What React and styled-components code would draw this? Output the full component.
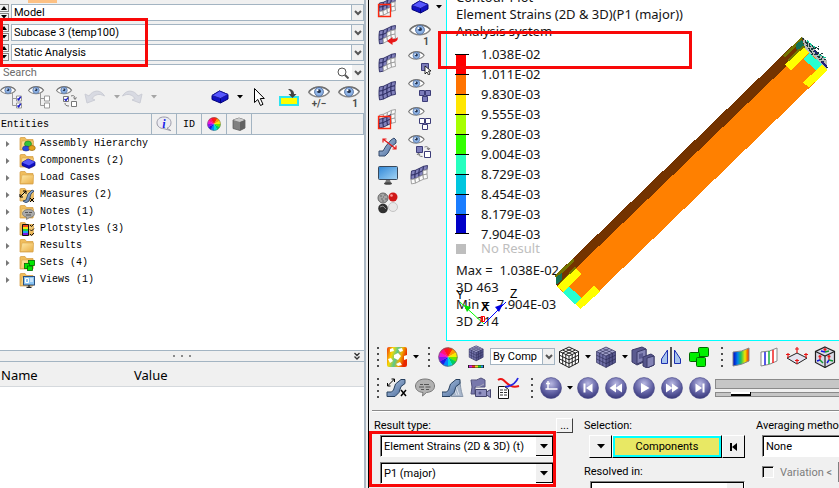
import styled, { createGlobalStyle } from "styled-components";

const GlobalStyle = createGlobalStyle`
  * {
    box-sizing: border-box;
  }
  body {
    margin: 0;
    background: #f0f0f0;
    color: #000;
    font-family: Roboto, "Liberation Sans", Arial, sans-serif;
    font-size: 11px;
  }
  button, select, input {
    font: inherit;
    color: inherit;
    margin: 0;
    padding: 0;
    border: 0;
    border-radius: 0;
    background: transparent;
  }
  svg {
    display: block;
    flex: none;
  }
`;

const Window = styled.div`
  display: flex;
  height: 100vh;
  overflow: hidden;
`;

const Sidebar = styled.aside`
  position: relative;
  flex: 0 0 369px;
  display: flex;
  flex-direction: column;
  padding-right: 2px;
  border-right: 1px solid #000;
`;

const SidebarBody = styled.div`
  flex: 1;
  min-height: 0;
  display: flex;
  flex-direction: column;
  border-right: 2px solid #acb9c5;
`;

const TabStrip = styled.div`
  display: flex;
  height: 4px;
  padding-left: 28px;
`;

const ActiveTab = styled.div`
  width: 29px;
  height: 3px;
  background: #fdc184;
`;

const FieldRow = styled.div`
  display: flex;
  gap: 2px;
  height: 17px;
  margin-bottom: 3px;
`;

const Stepper = styled.div`
  width: 9px;
  display: flex;
  flex-direction: column;
  gap: 1px;
`;

const StepButton = styled.button`
  flex: 1;
  display: flex;
  align-items: center;
  justify-content: center;
  border: 1px solid #888;
  border-left: 0;
  background: #f0f0f0;
`;

const Field = styled.div`
  flex: 1;
  min-width: 0;
  display: flex;
  height: 17px;
  border: 1px solid #a3b4c2;
  background: #fff;
`;

const FieldSelect = styled.select`
  flex: 1;
  min-width: 0;
  padding-left: 2px;
  appearance: none;
  outline: none;
`;

const FieldArrow = styled.span`
  width: 12px;
  display: flex;
  align-items: center;
  justify-content: center;
  background: #f0f0f0;
  border-left: ${(p) => (p.$flat ? "0" : "1px solid #a3b4c2")};
`;

const SearchField = styled(Field)`
  flex: none;
  align-items: center;
  border-left: 0;
  border-right: 0;
  input {
    flex: 1;
    min-width: 0;
    padding-left: 3px;
    outline: none;
  }
  input::placeholder {
    color: #6c6c6c;
    opacity: 1;
  }
  ${FieldArrow} {
    height: 15px;
    margin-left: 3px;
  }
`;

const ToolRow = styled.div`
  display: flex;
  align-items: center;
  height: ${(p) => p.$height}px;
`;

const Tool = styled.button`
  flex: none;
  display: flex;
  align-items: center;
  justify-content: ${(p) => (p.$start ? "flex-start" : "center")};
  width: ${(p) => p.$width || 28}px;
  height: 28px;
  opacity: ${(p) => (p.disabled ? 0.6 : 1)};
`;

const CaretButton = styled.button`
  flex: none;
  width: 9px;
  height: 24px;
  display: flex;
  align-items: center;
  justify-content: center;
  color: ${(p) => (p.disabled ? "#a5a5a5" : "#000")};
`;

const Spacer = styled.div`
  flex: 1;
`;

const TreeHead = styled.div`
  display: flex;
  height: 22px;
  border-top: 1px solid #a3b4c2;
  border-bottom: 1px solid #a3b4c2;
  font-family: "Liberation Mono", "Courier New", monospace;
  font-size: 10px;
`;

const HeadCell = styled.div`
  flex: ${(p) => (p.$width ? `0 0 ${p.$width}px` : 1)};
  display: flex;
  align-items: center;
  justify-content: ${(p) => (p.$text ? "flex-start" : "center")};
  padding-left: ${(p) => (p.$text ? 1 : 0)}px;
  border-right: 1px solid #a3b4c2;
`;

const Tree = styled.ul`
  flex: 1;
  min-height: 0;
  margin: 0;
  padding: 0;
  overflow: hidden;
  list-style: none;
  background: #fff;
  font-family: "Liberation Mono", "Courier New", monospace;
  font-size: 10px;
`;

const TreeItem = styled.li`
  display: flex;
  align-items: center;
  height: 17px;
  button {
    width: 19px;
    height: 17px;
    padding-left: 6px;
  }
  span {
    padding-left: 4px;
  }
`;

const Splitter = styled.div`
  display: grid;
  grid-template-columns: 1fr auto 1fr;
  align-items: center;
  height: 12px;
  border-top: 1px solid #a3b4c2;
  border-bottom: 1px solid #a3b4c2;
  button {
    justify-self: end;
    padding-right: 4px;
  }
`;

const PropertyPane = styled.div`
  flex: 0 0 126px;
  background: #fff;
`;

const PropertyTable = styled.table`
  width: 100%;
  border-collapse: collapse;
  table-layout: fixed;
  font-family: "Noto Sans", sans-serif;
  font-size: 13px;
  th {
    height: 24px;
    padding: 4px 0 1px 1px;
    background: #f0f0f0;
    border-bottom: 1px solid #d5d9dd;
    font-weight: 400;
    line-height: 18px;
    text-align: left;
  }
  th:first-child {
    width: 133px;
  }
`;

const Main = styled.main`
  flex: 1;
  min-width: 0;
  display: flex;
  flex-direction: column;
`;

const Stage = styled.div`
  flex: 1;
  min-height: 0;
  display: flex;
`;

const SideTools = styled.div`
  flex: 0 0 77px;
  display: flex;
  align-items: flex-start;
  gap: 4px;
  padding-left: 5px;
  overflow: hidden;
`;

const ToolColumn = styled.div`
  display: flex;
  flex-direction: column;
  margin-top: -7px;
`;

const Viewport = styled.section`
  position: relative;
  flex: 1;
  min-width: 0;
  display: flex;
  flex-direction: column;
  justify-content: flex-end;
  padding: 0 0 10px 9px;
  border-left: 1px solid #00ffff;
  border-bottom: 1px solid #00ffff;
  background: #fff;
  font-family: "Noto Sans", sans-serif;
  font-size: 13px;
  line-height: 17px;
  white-space: nowrap;
  color: #141414;
`;

const Caption = styled.div`
  margin-bottom: 4px;
`;

const Scale = styled.div`
  display: flex;
`;

const ScaleBar = styled.div`
  width: 14px;
  height: 180px;
  margin: 10px 0 0 -1px;
`;

const ScaleStep = styled.div`
  height: 20px;
  border-top: 1px solid #000;
  &:last-child {
    border-bottom: 1px solid #000;
  }
  &::before {
    content: "";
    display: block;
    width: 10px;
    height: 100%;
    margin-left: 1px;
    background: ${(p) => p.$color};
  }
`;

const ScaleLabels = styled.ol`
  margin: 0;
  padding: 0 0 0 12px;
  list-style: none;
  line-height: 20px;
`;

const NoResult = styled.div`
  display: flex;
  justify-content: flex-start;
  gap: 15px;
  height: 13px;
  margin-bottom: 8px;
  color: #bebebe;
  line-height: 9px;
  &::before {
    content: "";
    align-self: flex-end;
    width: 10px;
    height: 10px;
    background: #bebebe;
  }
`;

const Model = styled.svg`
  position: absolute;
  left: 93px;
  top: 20px;
`;

const Triad = styled.svg`
  position: absolute;
  left: 6px;
  bottom: 11px;
`;

const Marker = styled.div`
  position: absolute;
  z-index: 2;
  left: ${(p) => p.$left}px;
  top: ${(p) => p.$top}px;
  width: ${(p) => p.$width}px;
  height: ${(p) => p.$height}px;
  border: 3px solid #f80808;
  pointer-events: none;
`;

const Grip = styled.span`
  flex: none;
  width: 14px;
  height: 20px;
  padding-right: 4px;
  display: flex;
  justify-content: flex-end;
  &::before {
    content: "";
    width: 2px;
    background: repeating-linear-gradient(#4d4d4d 0 2px, transparent 2px 6px);
  }
`;

const ComboField = styled(Field)`
  flex: 0 0 65px;
`;

const Timeline = styled.div`
  flex: 1;
  display: flex;
  flex-direction: column;
  gap: 3px;
  padding-left: 1px;
`;

const Track = styled.div`
  height: ${(p) => p.$height}px;
  border: 1px solid #8a8a8a;
  border-right: 0;
  background: #c6c6c6;
`;

const Range = styled.input`
  appearance: none;
  display: block;
  width: 100%;
  height: 5px;
  border: 1px solid #8a8a8a;
  border-right: 0;
  background: #c6c6c6;
  outline: none;
  &::-webkit-slider-thumb {
    appearance: none;
    width: 20px;
    height: 4px;
    border-bottom: 2px solid #000;
    border-right: 1px solid #000;
    background: #fff;
  }
`;

const ResultPanel = styled.form`
  position: relative;
  flex: 0 0 85px;
  padding: 7px 0 0 3px;
  overflow: hidden;
`;

const PanelGrid = styled.div`
  display: grid;
  grid-template-columns: 199px 161px minmax(110px, 1fr);
  column-gap: 11px;
  border-top: 1px solid #8a8a8a;
  box-shadow: inset 0 1px #fff;
  padding: 7px 0 0 2px;
`;

const PanelColumn = styled.div`
  display: flex;
  flex-direction: column;
  min-width: 0;
`;

const LabelLine = styled.div`
  display: flex;
  justify-content: space-between;
  height: 17px;
  line-height: 16px;
  white-space: nowrap;
`;

const MoreButton = styled.button`
  width: 17px;
  height: 15px;
  border: 1px solid #fff;
  border-right-color: #404040;
  border-bottom-color: #404040;
  line-height: 10px;
`;

const Drop = styled.div`
  display: flex;
  height: 22px;
  margin: 0 ${(p) => p.$right || 0}px 5px 6px;
  border: 1px solid #808080;
  border-right-color: #fff;
  border-bottom-color: #fff;
  box-shadow: inset 1px 1px #000;
  background: #fff;
`;

const DropSelect = styled.select`
  flex: 1;
  min-width: 0;
  padding-left: 3px;
  appearance: none;
  outline: none;
`;

const DropArrow = styled.span`
  width: 17px;
  margin-top: 1px;
  display: flex;
  align-items: center;
  justify-content: center;
  background: #f0f0f0;
  border-right: 1px solid #000;
  border-bottom: 1px solid #000;
`;

const Picker = styled.div`
  display: flex;
  height: 23px;
  margin: 0 0 6px 5px;
`;

const PickerButton = styled.button`
  flex: ${(p) => (p.$grow ? 1 : "0 0 23px")};
  display: flex;
  align-items: center;
  justify-content: center;
  border: 1px solid #fff;
  border-right-color: #000;
  border-bottom-color: #000;
  ${(p) =>
    p.$grow &&
    `
    background: #e8e864;
    box-shadow: inset 0 0 0 2px #00ffff;
  `}
`;

const CheckLine = styled.div`
  display: flex;
  align-items: center;
  gap: 6px;
  margin-left: 6px;
  color: #7d7d7d;
  white-space: nowrap;
  input[type="checkbox"] {
    appearance: none;
    width: 12px;
    height: 12px;
    border: 1px solid #808080;
    border-right-color: #fff;
    border-bottom-color: #fff;
    box-shadow: inset 1px 1px #000;
  }
  input[type="text"] {
    flex: 1;
    min-width: 0;
    height: 20px;
    border: 1px solid #808080;
    box-shadow: inset 1px 1px #000;
  }
`;

/* shared paints for all the icons */
function Paints() {
  return (
    <svg width="0" height="0" style={{ position: "absolute" }} aria-hidden="true">
      <defs>
        <radialGradient id="ball" cx="50%" cy="30%" r="70%">
          <stop offset="0" stopColor="#b9b9e2" />
          <stop offset="0.6" stopColor="#6464a6" />
          <stop offset="1" stopColor="#38387a" />
        </radialGradient>
        <linearGradient id="folder" x2="1" y2="1">
          <stop offset="0" stopColor="#ffeaa8" />
          <stop offset="1" stopColor="#e9ad45" />
        </linearGradient>
        <linearGradient id="steel" x2="1" y2="1">
          <stop offset="0" stopColor="#b3c8e4" />
          <stop offset="1" stopColor="#46689a" />
        </linearGradient>
        <linearGradient id="rainbow">
          <stop offset="0" stopColor="#0000c8" />
          <stop offset="0.3" stopColor="#0084e8" />
          <stop offset="0.5" stopColor="#22c35a" />
          <stop offset="0.75" stopColor="#f2e600" />
          <stop offset="1" stopColor="#f02000" />
        </linearGradient>
        <linearGradient id="heat" x2="1" y2="0.3">
          <stop offset="0" stopColor="#f03010" />
          <stop offset="0.3" stopColor="#f8d800" />
          <stop offset="0.55" stopColor="#58c890" />
          <stop offset="0.75" stopColor="#f0b000" />
          <stop offset="1" stopColor="#e82800" />
        </linearGradient>
        <linearGradient id="screen" x2="1" y2="1">
          <stop offset="0" stopColor="#2f86d6" />
          <stop offset="1" stopColor="#a5d6f6" />
        </linearGradient>
      </defs>
    </svg>
  );
}

function Icon({ w = 22, h = 22, box, children }) {
  return (
    <svg width={w} height={h} viewBox={box || `0 0 ${w} ${h}`} fill="none" aria-hidden="true">
      {children}
    </svg>
  );
}

const Caret = () => (
  <Icon w={6} h={4}>
    <path d="M0 0h6L3 3.5z" fill="currentColor" />
  </Icon>
);

const Chevron = () => (
  <Icon w={8} h={6}>
    <path d="M1 1l3 3 3-3" stroke="#555" strokeWidth="2" />
  </Icon>
);

const BigCaret = () => (
  <Icon w={8} h={5}>
    <path d="M0 0h8L4 4.5z" fill="#000" />
  </Icon>
);

function EyeShape({ x = 0, y = 0, s = 1 }) {
  return (
    <g transform={`translate(${x} ${y}) scale(${s})`}>
      <path d="M0.7 6.2C5-.2 16-.6 21.3 5.6 17 12 5.5 12.5.7 6.2z" fill="#fff" stroke="#858585" strokeWidth="1.5" />
      <path d="M1 5.5C6-.5 16-.8 21 5" stroke="#6f6f6f" strokeWidth="1.2" />
      <circle cx="11" cy="5.8" r="4.4" fill="#8fb4e6" stroke="#5573a4" />
      <circle cx="11" cy="5.2" r="1.9" fill="#25344f" />
      <circle cx="9.5" cy="4.3" r="1" fill="#fff" />
    </g>
  );
}

function Eye({ text }) {
  return (
    <Icon w={22} h={24}>
      <EyeShape y={1} />
      <text x={text === "1" ? 17 : 11} y="22" textAnchor="middle" fontSize="10" fontWeight="bold" fill="#4c4c4c">
        {text}
      </text>
    </Icon>
  );
}

function EyeTree({ mode }) {
  const on = mode === "on";
  return (
    <Icon w={24} h={24}>
      <EyeShape y={1} s={0.73} />
      {mode === "swap" ? (
        <g>
          <path d="M7.5 11.5h5v5h-5zM15.5 16.5h5v5h-5z" fill="#fff" stroke="#777" />
          <path d="M8.5 14l1.5 1.5 2-3" stroke="#1515c8" strokeWidth="1.3" />
          <path d="M15 11c3-1 4 0 4 3M17.5 12.5L19 14.5l1.5-2M13 21c-3 0-4-1-4-3" stroke="#777" />
        </g>
      ) : (
        <g>
          <path d="M12.5 8v12.5H16M12.5 13.5H16" stroke="#999" />
          <path d="M16.5 11h5v5h-5zM16.5 18h5v5h-5z" fill="#fff" stroke="#999" />
          {on && <path d="M17.5 13.5l1.2 1.2 2-3M17.5 20.5l1.2 1.2 2-3" stroke="#1515c8" strokeWidth="1.5" />}
        </g>
      )}
    </Icon>
  );
}

const eyeExtras = {
  pick: (
    <g>
      <path d="M13.5 12.5h7v7h-7z" fill="#7c7cba" stroke="#3c3c78" />
      <path d="M17 15v8l2-2 1.5 3 1.5-1-1.5-3h2.5z" fill="#fff" stroke="#000" strokeWidth="0.8" />
    </g>
  ),
  filled: <path d="M11.5 11.5h5v5h-5zM17.500 11.500h5v5h-5zM14.500 17.500h5v5h-5z" fill="#7c7cba" stroke="#3c3c78" />,
  hollow: <path d="M11.5 11.5h5v5h-5zM17.500 11.500h5v5h-5zM14.500 17.500h5v5h-5z" fill="#fff" stroke="#3c3c78" />,
  swap: (
    <g>
      <path d="M8.5 11.5h6v6h-6z" fill="#7c7cba" stroke="#3c3c78" />
      <path d="M16.5 16.5h6v6h-6z" fill="#fff" stroke="#3c3c78" />
      <path d="M16.5 12c3-1 4 0 4 3M19 13L20.500 15l1.500-2M14.500 21.500c-3 0-4-1-4-3M9 20l1.500-2 1.500 2" stroke="#777" />
    </g>
  ),
};

const EyeWith = ({ kind }) => (
  <Icon w={24} h={24}>
    <EyeShape y={0} s={0.76} />
    {eyeExtras[kind]}
  </Icon>
);

/* curved 4 x 3 sheet; each fill names the cells that are shaded */
const meshFills = {
  all: () => true,
  upper: (c, r) => r < 2 && !(c === 3 && r > 0) && !(c === 2 && r > 1),
  corner: (c, r) => r < 1 || (c < 2 && r < 2) || (c < 1 && r < 3),
  lower: (c, r) => r > 0 && c < 3,
};

const meshPoint = (c, r) => `${2 + c * 4 + (r === 1 || r === 2 ? 0 : 0.5)} ${(7 + r * 4.3 - 5.5 * (0.5 - 0.5 * Math.cos((c * Math.PI) / 4))).toFixed(1)}`;

function Mesh({ fill = "upper", red, arrow }) {
  const cells = [];
  for (let r = 0; r < 3; r++) {
    for (let c = 0; c < 4; c++) {
      const shaded = meshFills[fill](c, r);
      cells.push(
        <path
          key={`${c}-${r}`}
          d={`M${meshPoint(c, r)}L${meshPoint(c + 1, r)}L${meshPoint(c + 1, r + 1)}L${meshPoint(c, r + 1)}z`}
          fill={shaded ? "#8282bc" : "#fafafa"}
          stroke={shaded ? "#2b2b62" : "#999"}
          strokeWidth="0.9"
        />
      );
    }
  }
  return (
    <Icon w={22} h={22}>
      {cells}
      {red && <path d="M1.5 8.5h12v12h-12z" stroke="#ff2810" strokeWidth="1.3" />}
      {arrow && <path d="M20.5 13c1 4-2 5-5 5.500v2.500l-5.500-4 5.500-4v2c3 0 4-.500 5-2z" fill="#e81818" />}
    </Icon>
  );
}

const Brick = () => (
  <Icon w={18} h={14}>
    <path d="M1 5.5L8.5 1 17 4.5V9L9.5 13 1 9.5z" fill="#1111c4" stroke="#00007a" />
    <path d="M1 5.5L8.5 1 17 4.5 9.5 8.5z" fill="#5656ff" stroke="#1a1a9c" />
    <path d="M9.5 8.5V13" stroke="#00007a" />
  </Icon>
);

const wheelColors = ["#ff2a00", "#ff9a00", "#f5ee00", "#6be800", "#00d060", "#00d8e0", "#0086ff", "#1b1be8", "#8b12ec", "#e815d8", "#ff1080", "#ff1028"];

function Wheel({ size = 20 }) {
  return (
    <Icon w={size} h={size} box="-10 -10 20 20">
      {wheelColors.map((c, i) => {
        const a = (i * Math.PI) / 6;
        const b = ((i + 1.1) * Math.PI) / 6;
        return <path key={c} fill={c} d={`M0 0L${9.5 * Math.sin(a)} ${-9.5 * Math.cos(a)}A9.5 9.5 0 0 1 ${9.5 * Math.sin(b)} ${-9.5 * Math.cos(b)}z`} />;
      })}
      <circle r="9.3" stroke="#666" strokeWidth="0.7" />
    </Icon>
  );
}

function CubeShape({ wire }) {
  return (
    <g>
      <path d="M11 1l9.5 4.5v11L11 21.5l-9.5-5v-11z" fill={wire ? "#fff" : "#7373aa"} />
      {!wire && <path d="M11 1l9.5 4.5L11 10 1.5 5.5z" fill="#a6a6d0" />}
      {!wire && <path d="M11 10l9.5-4.5v11L11 21.5z" fill="#56568c" />}
      <path
        d="M11 1l9.5 4.5v11L11 21.5l-9.5-5v-11zM1.5 5.5L11 10l9.5-4.5M11 10v11.5M4.7 4l9.5 4.500v11.500M7.800 2.500l9.500 4.500v11.500M17.300 4L7.800 8.500v11.500M14.200 2.500L4.700 7v11.500M1.500 9.200L11 13.800l9.500-4.600M1.500 12.900L11 17.600l9.500-4.700"
        stroke={wire ? "#222" : "#25254f"}
        strokeWidth={wire ? 1 : 0.6}
      />
    </g>
  );
}

const Cube = ({ wire }) => (
  <Icon w={22} h={22}>
    <CubeShape wire={wire} />
  </Icon>
);

const GrayCube = () => (
  <Icon w={14} h={14}>
    <path d="M1 3l6-2 6 2v8l-5 2.5L1 11.5z" fill="#808080" stroke="#555" strokeWidth="0.7" />
    <path d="M1 3l6-2 6 2-5 2z" fill="#ccc" />
    <path d="M8 5l5-2v8l-5 2.5z" fill="#626262" />
  </Icon>
);

const CubeBar = () => (
  <Icon w={18} h={24}>
    <g transform="translate(1 0) scale(0.74)">
      <CubeShape />
    </g>
    <path d="M1 20h16v3H1z" fill="#222" />
    <path d="M2 20.5h3v2H2z" fill="#e020e0" />
    <path d="M5 20.5h3v2H5z" fill="#f03020" />
    <path d="M8 20.5h3v2H8z" fill="#f0e020" />
    <path d="M11 20.5h3v2h-3z" fill="#20d020" />
    <path d="M14 20.5h2v2h-2z" fill="#20a0f0" />
  </Icon>
);

const Beam = ({ x = 0, y = 0 }) => (
  <path
    transform={`translate(${x} ${y})`}
    d="M1 15v4.500h8l4-4 2-6 4-3V2.500h-4L9.500 7l-2 6-2 2z"
    fill="url(#steel)"
    stroke="#27405f"
  />
);

const MeasureIcon = () => (
  <Icon w={22} h={22}>
    <Beam />
    <path d="M1.5 9l7-7M1.5 6v3h3M5.5 2h3v3" stroke="#000" />
    <path d="M15 13l5 6M20 13l-5 6" stroke="#000" strokeWidth="1.5" />
  </Icon>
);

const SectionIcon = () => (
  <Icon w={22} h={22}>
    <path d="M2 15h4l3-5 5-6 3-2 2 2v3l-5 4-3 6-3 3H2z" fill="url(#steel)" stroke="#33496b" />
    <path d="M6 3l13 10M6 6.500V3h3.500M15.500 13H19V9.500" stroke="#e81818" strokeWidth="1.2" />
  </Icon>
);

const Bubble = () => (
  <Icon w={22} h={22}>
    <path d="M11 2c6 0 9.500 3 9.500 7s-3 6-8 6.500L8.500 19l.5-3.500C4 15 1.500 12.500 1.500 9S5 2 11 2z" fill="#b2b2b2" stroke="#777" />
    <path d="M6 7.500h3M10 7.500h5M5 10h5M11.500 10h5M7 12.500h3M12 12.500h3" stroke="#555" />
  </Icon>
);

const DeformedIcon = () => (
  <Icon w={22} h={22}>
    <path d="M9 19.500h12c-1-3-2-5-3-15l-4 3z" fill="#a9b7cb" stroke="#8796aa" />
    <path d="M14 9l3 9M12 12l3 6" stroke="#dde4ee" />
    <Beam x={-1} />
  </Icon>
);

const CameraIcon = () => (
  <Icon w={24} h={22}>
    <path d="M2 3q6 1 10-2l4 2v7H6v7H2l1-7z" fill="#7878ac" stroke="#51517c" />
    <path d="M7 10q4 0 8-3" stroke="#aab" />
    <path d="M6.5 12.5h11v7h-11zM17.5 15l4-2.5v8l-4-2.5z" fill="#9090c0" stroke="#44446e" />
    <circle cx="11" cy="16" r="1.5" fill="#55558a" />
  </Icon>
);

const PlotIcon = () => (
  <Icon w={24} h={22}>
    <path d="M1 3C8-2 9 13 22 9" stroke="#ee1515" strokeWidth="2" />
    <path d="M8 10C15 9 19 6 21 1" stroke="#2525e0" strokeWidth="1.8" />
    <path d="M1.5 9.500h6l4 3v9h-10z" fill="#fff" stroke="#111" />
    <path d="M3 13h3M7 13h3M3 15.500h3M7 15.500h3M3 18h3M7 18h3" stroke="#333" />
  </Icon>
);

const ContourIcon = () => (
  <Icon w={20} h={20}>
    <rect width="20" height="20" rx="2" fill="url(#heat)" />
    <path d="M3 2l3-1 1 3-4 1zM11 2l4-1 1 3-3 1zM1 12l3-1 2 3-3 2zM7 8l4-2 3 3-3 4-4-2zM9 17l4-2 2 3-4 1zM17 9l3-1v4l-3 1z" fill="#fff" />
  </Icon>
);

const CubesIcon = () => (
  <Icon w={24} h={22}>
    <path d="M1 4l10-3 4 2v12l-9 4-5-3z" fill="#5a5a90" stroke="#3a3a68" />
    <path d="M6 6l9-3v11l-9 4z" fill="#8484b6" stroke="#3a3a68" />
    <path d="M8 8l4-1v5l-4 1z" fill="#5a5a90" />
    <path d="M12 11l8-3 3 2v9l-7 3-4-2z" fill="#56568c" stroke="#3a3a68" />
    <path d="M16 12l7-2v9l-7 3z" fill="#8484b6" stroke="#3a3a68" />
  </Icon>
);

const MirrorIcon = () => (
  <Icon w={22} h={22}>
    <path d="M11 1v20" stroke="#000" strokeWidth="1.3" />
    <path d="M7.5 4v13.500h-6V13z" fill="#a7c4ee" stroke="#1c2fb0" />
    <path d="M14.5 4v13.500h6V13z" fill="#a7c4ee" stroke="#1c2fb0" />
  </Icon>
);

const SetsIcon = () => (
  <Icon w={22} h={22}>
    <g fill="#00f000" stroke="#006a00">
      <rect x="10.5" y="1.5" width="10" height="9" rx="1" />
      <rect x="1.5" y="6.5" width="10" height="9" rx="1" />
      <rect x="8.5" y="11.5" width="9" height="9" rx="1" />
    </g>
  </Icon>
);

const SheetIcon = ({ lines }) => (
  <Icon w={20} h={20}>
    <path d="M2 5q9 0 16-4v13q-7 4-16 5z" fill={lines ? "#fff" : "url(#rainbow)"} stroke="#888" />
    {lines && (
      <g strokeWidth="1.5">
        <path d="M6 5v13" stroke="#2020e0" />
        <path d="M10 4v13" stroke="#10b040" />
        <path d="M14 3v13" stroke="#f02020" />
      </g>
    )}
  </Icon>
);

const VectorIcon = () => (
  <Icon w={22} h={22}>
    <path d="M1 12l10-5 10 5-10 6z" fill="#e4e4f0" stroke="#222" />
    <path d="M11 7V1M9 3h4M2 12V7M0 8.500h4M20 12V7M18 8.500h4M11 18v-5M9 14.500h4" stroke="#e81818" strokeWidth="1.2" />
  </Icon>
);

const TensorIcon = () => (
  <Icon w={22} h={22}>
    <path d="M11 1l9.5 4.5v11L11 21.5l-9.5-5v-11z" fill="#d9d9e6" stroke="#222" strokeWidth="1.2" />
    <path d="M1.5 5.5L11 10l9.500-4.500M11 10v11.500" stroke="#222" strokeWidth="1.2" />
    <path d="M11 6V2M9.500 3.500h3M6 14v-5M4.500 10.500h3M15 14v-5M13.500 10.500h3" stroke="#e81818" strokeWidth="1.3" />
    <path d="M11 6l-4-1M6 14l-3 1M15 14l-2 3" stroke="#1515e0" strokeWidth="1.5" />
    <path d="M11 6l4-1M6 14l3 3M15 14l4 1" stroke="#109a30" strokeWidth="1.5" />
  </Icon>
);

const playGlyphs = {
  axis: <path d="M8 4v8M5.5 12h12M6 6.500h4" stroke="#fff" strokeWidth="1.4" />,
  first: <path d="M6.5 6.500h2v9h-2zM15.500 6.500v9L9 11z" fill="#fff" />,
  back: <path d="M11 6.500v9L4.500 11zM17 6.500v9L10.500 11z" fill="#fff" />,
  play: <path d="M8 6l8.500 5L8 16z" fill="#fff" />,
  next: <path d="M5 6.500v9l6.500-4.500zM11 6.500v9l6.500-4.500z" fill="#fff" />,
  last: <path d="M6.5 6.500v9L13 11zM13.500 6.500h2v9h-2z" fill="#fff" />,
};

const Ball = ({ glyph }) => (
  <Icon w={22} h={22}>
    <circle cx="11" cy="11" r="10.5" fill="url(#ball)" stroke="#4a4a88" strokeWidth="0.6" />
    {playGlyphs[glyph]}
  </Icon>
);

const MonitorIcon = () => (
  <Icon w={20} h={20}>
    <rect x="0.5" y="1.5" width="19" height="13" rx="1" fill="url(#screen)" stroke="#39485a" />
    <path d="M8 15h4l1 3H7z" fill="#777" />
    <ellipse cx="10" cy="18.5" rx="4" ry="1.3" fill="#444" />
  </Icon>
);

const MaterialsIcon = () => (
  <Icon w={22} h={22}>
    <circle cx="6" cy="6" r="5" fill="#a5a5a5" stroke="#666" />
    <path d="M3 4h2M7 3h2M4 7h2M8 7h2M6 5h1M5 9h2" stroke="#666" />
    <circle cx="16" cy="5" r="4.5" fill="#d01818" />
    <circle cx="14.5" cy="3.5" r="1.3" fill="#ff9c9c" />
    <circle cx="6" cy="16.5" r="4.8" fill="#303030" />
    <path d="M3 15l3-1 3 3" stroke="#888" />
    <circle cx="16" cy="15" r="4.5" fill="#e8e8e8" stroke="#c4c4c4" />
  </Icon>
);

const Turn = ({ flip }) => (
  <Icon w={22} h={16}>
    <path
      transform={flip ? "translate(22 0) scale(-1 1)" : undefined}
      d="M1 5l2 9 8-3-3-1.5C11 5.500 15 4 20.500 7 17 .5 9 .5 5 7z"
      fill="#c9ccda"
      stroke="#b3b6c4"
    />
  </Icon>
);

const CursorIcon = () => (
  <Icon w={12} h={20}>
    <path d="M1.5 1.500v14l3.300-3 2.700 6 2.500-1.200-2.700-5.800h4z" fill="#fff" stroke="#000" />
  </Icon>
);

const HighlightIcon = () => (
  <Icon w={22} h={20}>
    <path d="M2 10h18v8H2z" fill="#ffff00" stroke="#2be4f0" strokeWidth="2" />
    <path d="M10 2c4 0 6 2 6 5h2.500L14.500 11 10.500 7H13c0-2-1-3.500-3-5z" fill="#444" />
  </Icon>
);

const InfoIcon = () => (
  <Icon w={17} h={16}>
    <path d="M8 1c4.500 0 7 2.500 7 5.800 0 3-2 4.700-4 5.400l4 2.500-7-2C3.500 12.500 1 10 1 6.800 1 3.500 3.500 1 8 1z" fill="#ebebf2" stroke="#9a9aa8" />
    <text x="8" y="11.5" textAnchor="middle" fontSize="12" fontWeight="bold" fontStyle="italic" fontFamily="Liberation Serif, serif" fill="#1520e8">
      i
    </text>
  </Icon>
);

const Magnifier = () => (
  <Icon w={12} h={12}>
    <circle cx="5" cy="5" r="4" stroke="#555" />
    <path d="M8 8l3.5 3.500" stroke="#555" strokeWidth="2" />
  </Icon>
);

const badges = {
  assembly: (
    <g>
      <ellipse cx="9" cy="8" rx="3.5" ry="3" fill="#35c23a" stroke="#157a1a" strokeWidth="0.6" />
      <ellipse cx="7" cy="12.5" rx="3.5" ry="2.5" fill="#2a48dc" stroke="#152a90" strokeWidth="0.6" />
      <ellipse cx="13" cy="12" rx="3.3" ry="2.5" fill="#e2a21c" stroke="#8f6008" strokeWidth="0.6" />
    </g>
  ),
  brick: (
    <g>
      <path d="M3 9.500l6-3.500 7 3v3.500L10 15.500 3 12.500z" fill="#1111c4" stroke="#00007a" strokeWidth="0.7" />
      <path d="M3 9.500l6-3.500 7 3-6 3.500z" fill="#5656f6" />
    </g>
  ),
  measure: (
    <g>
      <path d="M4 14l3-1 2-6 4-4 2 1-3 3-2 7-3 2z" fill="url(#steel)" stroke="#27405f" strokeWidth="0.8" />
      <path d="M1 10l6-6M1 7v3h3M4 4h3v3M11 11l4 4M15 11l-4 4" stroke="#000" />
    </g>
  ),
  note: (
    <g>
      <path d="M9.5 5.500c4 0 6 2 6 4s-2 4-5 4l-3 2v-2.500c-2.500-.5-4-1.500-4-3.500s2-4 6-4z" fill="#aaa" stroke="#777" strokeWidth="0.8" />
      <path d="M6 8.500h3M10 8.500h3M7 11h5" stroke="#555" />
    </g>
  ),
  style: (
    <g>
      <path d="M3.5 3.500h6v11h-6z" fill="#f04a20" stroke="#111" />
      <path d="M4 6h5v2H4z" fill="#f3e514" />
      <path d="M4 8h5v2H4z" fill="#22d040" />
      <path d="M4 10h5v2H4z" fill="#1c9ff0" />
      <path d="M4 12h5v2H4z" fill="#7a18e0" />
      <path d="M11 4l1.500 1.500L15 3M11 8.500l1.500 1.500L15 7.500M11 13l1.500 1.500L15 12" stroke="#111" />
    </g>
  ),
  sets: (
    <g fill="#00e800" stroke="#006a00" strokeWidth="0.8">
      <rect x="9.5" y="5.5" width="6" height="5" />
      <rect x="5.5" y="8.5" width="5" height="5" />
      <rect x="8.5" y="11" width="5" height="4.5" />
    </g>
  ),
  view: (
    <g>
      <rect x="4.5" y="4.5" width="11" height="8.5" fill="#8ac4f2" stroke="#2a4f80" />
      <path d="M6.5 6.500h3v4h-3zM11 7h3M11 9h3" stroke="#fff" />
      <path d="M10 13v2M7.500 15.500h5" stroke="#222" strokeWidth="1.3" />
    </g>
  ),
};

const Folder = ({ badge }) => (
  <Icon w={17} h={16}>
    <path d="M1 2.500q0-1 1-1h4l1.500 2h6.500v10.500H1z" fill="#f0bd5c" stroke="#d29a3c" strokeWidth="0.7" />
    <path d="M1.500 13.500L3 5h11.500l-.5 8.500z" fill="url(#folder)" stroke="#d9a44a" strokeWidth="0.6" />
    {badges[badge]}
  </Icon>
);

const Twisty = () => (
  <Icon w={4} h={6}>
    <path d="M0 0v6L3.500 3z" fill="#777" />
  </Icon>
);

const loadFields = [
  ["Model", "Model"],
  ["Subcase", "Subcase 3 (temp100)"],
  ["Simulation", "Static Analysis"],
];

const entities = [
  ["Assembly Hierarchy", "assembly"],
  ["Components (2)", "brick"],
  ["Load Cases"],
  ["Measures (2)", "measure"],
  ["Notes (1)", "note"],
  ["Plotstyles (3)", "style"],
  ["Results"],
  ["Sets (4)", "sets"],
  ["Views (1)", "view"],
];

const scaleColors = ["#ff0000", "#ff7300", "#ffe600", "#a6ff00", "#33ff00", "#26ffbf", "#00c6df", "#1a7dff", "#0000c8"];
const scaleValues = ["1.038E-02", "1.011E-02", "9.830E-03", "9.555E-03", "9.280E-03", "9.004E-03", "8.729E-03", "8.454E-03", "8.179E-03", "7.904E-03"];

function BeamModel() {
  return (
    <Model width="299" height="300" viewBox="0 0 897 900" shapeRendering="crispEdges" aria-hidden="true">
      <path d="M46 766L785 50l12 35L50 800z" fill="#733300" />
      <path d="M50 800L796 84l67 66L122 867z" fill="#ff8000" />
      <path d="M46 766l54-52 3 10-56 53zM50 800l55-61 4 8-54 56zM728 107l57-57 3 8-52 53zM745 118l48-47 4 14-58 52z" fill="#737300" />
      <path d="M48 772l18-14v20l-16 18zM768 74l18-16 6 18-22 16z" fill="#137356" />
      <path d="M50 800l58-55 15 17-51 54zM105 851l57-53 18 17-58 52zM735 134l57-52 16 15-55 56zM789 187l57-52 17 15-56 53z" fill="#ffff00" />
      <path d="M70 818l18-18 37 34-20 18zM790 117l18-18 38 34-18 17z" fill="#26ffd0" />
      <path d="M785 50l77 73v26L796 86z" fill="#b9b9b9" />
      <path d="M788 54l74 90M797 66l40 22M806 92l30-12M812 104l36-4M832 96l28 26M820 82l30 44M800 76l18 26" stroke="#1b3a3a" strokeWidth="4" strokeDasharray="6 4" />
      <path d="M800 62l24 20M838 104l22 12" stroke="#1ac79c" strokeWidth="4" strokeDasharray="8 5" />
      <path d="M822 92l10 10M846 126l14 14" stroke="#20207a" strokeWidth="5" />
    </Model>
  );
}

function AxisTriad() {
  return (
    <Triad width="66" height="44" fontFamily="Liberation Sans, sans-serif" fontSize="12" fill="#000" aria-hidden="true">
      <path d="M7 17l24 22" stroke="#00ff00" />
      <path d="M11 20l7 2-4 5z" fill="#00e000" />
      <path d="M31 39l22-22" stroke="#0000ff" />
      <path d="M50 19l-8 3 4 5z" fill="#0000e0" />
      <path d="M29.5 37v-5M28 31.500h3.500v5H28z" stroke="#ff0000" fill="none" />
      <text x="3" y="14">Y</text>
      <text x="28" y="26" fontWeight="bold">X</text>
      <text x="57" y="13">Z</text>
    </Triad>
  );
}

function ToolButton({ label, ...rest }) {
  return <Tool type="button" aria-label={label} {...rest} />;
}

function CaretMenu({ label, disabled }) {
  return (
    <CaretButton type="button" aria-label={label} disabled={disabled}>
      <Caret />
    </CaretButton>
  );
}

function Browser() {
  return (
    <Sidebar>
      <SidebarBody>
        <TabStrip>
          <ActiveTab />
        </TabStrip>
        {loadFields.map(([name, value]) => (
          <FieldRow key={name}>
            <Stepper>
              <StepButton type="button" aria-label={`Previous ${name}`}>
                <Icon w={6} h={4}>
                  <path d="M0 4h6L3 0z" fill="#000" />
                </Icon>
              </StepButton>
              <StepButton type="button" aria-label={`Next ${name}`}>
                <Caret />
              </StepButton>
            </Stepper>
            <Field>
              <FieldSelect aria-label={name}>
                <option>{value}</option>
              </FieldSelect>
              <FieldArrow>
                <Chevron />
              </FieldArrow>
            </Field>
          </FieldRow>
        ))}
        <SearchField>
          <input type="search" aria-label="Search" placeholder="Search" />
          <Magnifier />
          <FieldArrow $flat>
            <Chevron />
          </FieldArrow>
        </SearchField>
        <ToolRow $height={32}>
          <ToolButton label="Show all" $start><EyeTree mode="on" /></ToolButton>
          <ToolButton label="Hide all" $start><EyeTree mode="off" /></ToolButton>
          <ToolButton label="Reverse" $start><EyeTree mode="swap" /></ToolButton>
          <ToolButton label="Undo" $start disabled><Turn /></ToolButton>
          <CaretMenu label="Undo list" disabled />
          <ToolButton label="Redo" $start disabled><Turn flip /></ToolButton>
          <CaretMenu label="Redo list" disabled />
          <Spacer />
          <ToolButton label="Components" $width={30}><Brick /></ToolButton>
          <CaretMenu label="Entity type" />
          <ToolButton label="Select" $width={30}><CursorIcon /></ToolButton>
          <ToolButton label="Find" $width={30}><HighlightIcon /></ToolButton>
          <ToolButton label="Show or hide" $width={30}><Eye text="+/−" /></ToolButton>
          <ToolButton label="Isolate" $width={30}><Eye text="1" /></ToolButton>
        </ToolRow>
        <TreeHead>
          <HeadCell $width={152} $text>Entities</HeadCell>
          <HeadCell $width={25}><InfoIcon /></HeadCell>
          <HeadCell $width={25}>ID</HeadCell>
          <HeadCell $width={25}><Wheel size={14} /></HeadCell>
          <HeadCell $width={25}><GrayCube /></HeadCell>
          <HeadCell />
        </TreeHead>
        <Tree>
          {entities.map(([name, badge]) => (
            <TreeItem key={name}>
              <button type="button" aria-label={`Expand ${name}`}>
                <Twisty />
              </button>
              <Folder badge={badge} />
              <span>{name}</span>
            </TreeItem>
          ))}
        </Tree>
        <Splitter>
          <span />
          <Icon w={18} h={2}>
            <path d="M0 0h2v2H0zM8 0h2v2H8zM16 0h2v2h-2z" fill="#8a8a8a" />
          </Icon>
          <button type="button" aria-label="Collapse">
            <Icon w={6} h={8}>
              <path d="M0.5 1L3 3.500 5.500 1M0.500 4.500L3 7l2.500-2.500" stroke="#333" strokeWidth="1.3" />
            </Icon>
          </button>
        </Splitter>
        <PropertyPane>
          <PropertyTable>
            <thead>
              <tr>
                <th>Name</th>
                <th>Value</th>
              </tr>
            </thead>
          </PropertyTable>
        </PropertyPane>
      </SidebarBody>
      <Marker $left={0} $top={18} $width={148} $height={49} />
    </Sidebar>
  );
}

function ContourView() {
  return (
    <Viewport>
      <BeamModel />
      <Caption>
        <div>Contour Plot</div>
        <div>Element Strains (2D &amp; 3D)(P1 (major))</div>
        <div>Analysis system</div>
      </Caption>
      <Scale>
        <ScaleBar>
          {scaleColors.map((c) => (
            <ScaleStep key={c} $color={c} />
          ))}
        </ScaleBar>
        <ScaleLabels>
          {scaleValues.map((v) => (
            <li key={v}>{v}</li>
          ))}
        </ScaleLabels>
      </Scale>
      <NoResult>No Result</NoResult>
      <div>Max =&nbsp; 1.038E-02</div>
      <div>3D 463</div>
      <div>Min =&nbsp; 7.904E-03</div>
      <div>3D 214</div>
      <AxisTriad />
      <Marker $left={-9} $top={31} $width={254} $height={38} />
    </Viewport>
  );
}

function ResultForm() {
  return (
    <ResultPanel>
      <PanelGrid>
        <PanelColumn>
          <LabelLine>
            <label htmlFor="result-type">Result type:</label>
            <MoreButton type="button">...</MoreButton>
          </LabelLine>
          <Drop $right={19}>
            <DropSelect id="result-type">
              <option>Element Strains (2D &amp; 3D) (t)</option>
            </DropSelect>
            <DropArrow><BigCaret /></DropArrow>
          </Drop>
          <Drop $right={19}>
            <DropSelect aria-label="Result component">
              <option>P1 (major)</option>
            </DropSelect>
            <DropArrow><BigCaret /></DropArrow>
          </Drop>
        </PanelColumn>
        <PanelColumn>
          <LabelLine>Selection:</LabelLine>
          <Picker>
            <PickerButton type="button" aria-label="Selection type"><BigCaret /></PickerButton>
            <PickerButton type="button" $grow>Components</PickerButton>
            <PickerButton type="button" aria-label="Reset selection">
              <Icon w={8} h={8}>
                <path d="M0 0h2v8H0zM7 0v8L2 4z" fill="#000" />
              </Icon>
            </PickerButton>
          </Picker>
          <LabelLine>
            <label htmlFor="resolved-in">Resolved in:</label>
          </LabelLine>
          <Drop>
            <DropSelect id="resolved-in">
              <option>Analysis System</option>
            </DropSelect>
            <DropArrow><BigCaret /></DropArrow>
          </Drop>
        </PanelColumn>
        <PanelColumn>
          <LabelLine>
            <label htmlFor="averaging">Averaging method:</label>
          </LabelLine>
          <Drop>
            <DropSelect id="averaging">
              <option>None</option>
            </DropSelect>
          </Drop>
          <CheckLine>
            <input type="checkbox" id="variation" />
            <label htmlFor="variation">Variation &lt;</label>
            <input type="text" aria-label="Variation limit" />
          </CheckLine>
        </PanelColumn>
      </PanelGrid>
      <Marker $left={0} $top={28} $width={187} $height={56} />
    </ResultPanel>
  );
}

function App() {
  return (
    <>
      <GlobalStyle />
      <Paints />
      <Window>
        <Browser />
        <Main>
          <Stage>
            <SideTools>
              <ToolColumn>
                <ToolButton label="Mask box"><Mesh fill="upper" red /></ToolButton>
                <ToolButton label="Unmask"><Mesh fill="corner" arrow /></ToolButton>
                <ToolButton label="Mask"><Mesh fill="corner" /></ToolButton>
                <ToolButton label="Show mesh"><Mesh fill="all" /></ToolButton>
                <ToolButton label="Clip box"><Mesh fill="lower" red /></ToolButton>
                <ToolButton label="Section cut"><SectionIcon /></ToolButton>
                <ToolButton label="Display"><MonitorIcon /></ToolButton>
                <ToolButton label="Materials"><MaterialsIcon /></ToolButton>
              </ToolColumn>
              <ToolColumn>
                <ToolRow $height={28}>
                  <ToolButton label="Component"><Brick /></ToolButton>
                  <CaretMenu label="Component list" />
                </ToolRow>
                <ToolButton label="Isolate one"><Eye text="1" /></ToolButton>
                <ToolButton label="Pick"><EyeWith kind="pick" /></ToolButton>
                <ToolButton label="Show"><EyeWith kind="filled" /></ToolButton>
                <ToolButton label="Hide"><EyeWith kind="hollow" /></ToolButton>
                <ToolButton label="Swap"><EyeWith kind="swap" /></ToolButton>
                <ToolButton label="Partial mesh"><Mesh fill="upper" /></ToolButton>
              </ToolColumn>
            </SideTools>
            <ContourView />
          </Stage>
          <ToolRow $height={31}>
            <Grip />
            <ToolButton label="Contour"><ContourIcon /></ToolButton>
            <CaretMenu label="Contour list" />
            <Grip />
            <ToolButton label="Color"><Wheel /></ToolButton>
            <ToolButton label="Color mode"><CubeBar /></ToolButton>
            <ComboField>
              <FieldSelect aria-label="Color by">
                <option>By Comp</option>
              </FieldSelect>
              <FieldArrow><Chevron /></FieldArrow>
            </ComboField>
            <ToolButton label="Wireframe"><Cube wire /></ToolButton>
            <CaretMenu label="Wireframe list" />
            <ToolButton label="Shaded"><Cube /></ToolButton>
            <CaretMenu label="Shaded list" />
            <ToolButton label="Exploded"><CubesIcon /></ToolButton>
            <ToolButton label="Symmetry"><MirrorIcon /></ToolButton>
            <ToolButton label="Sets"><SetsIcon /></ToolButton>
            <Grip />
            <ToolButton label="Contour plot"><SheetIcon /></ToolButton>
            <ToolButton label="Iso plot"><SheetIcon lines /></ToolButton>
            <ToolButton label="Vector plot"><VectorIcon /></ToolButton>
            <ToolButton label="Tensor plot"><TensorIcon /></ToolButton>
          </ToolRow>
          <ToolRow $height={31}>
            <Grip />
            <ToolButton label="Measure"><MeasureIcon /></ToolButton>
            <ToolButton label="Note"><Bubble /></ToolButton>
            <ToolButton label="Deformed"><DeformedIcon /></ToolButton>
            <ToolButton label="Tracking"><CameraIcon /></ToolButton>
            <ToolButton label="Build plots"><PlotIcon /></ToolButton>
            <Grip />
            <ToolButton label="Animation type"><Ball glyph="axis" /></ToolButton>
            <CaretMenu label="Animation types" />
            <ToolButton label="First"><Ball glyph="first" /></ToolButton>
            <ToolButton label="Back"><Ball glyph="back" /></ToolButton>
            <ToolButton label="Play"><Ball glyph="play" /></ToolButton>
            <ToolButton label="Next"><Ball glyph="next" /></ToolButton>
            <ToolButton label="Last"><Ball glyph="last" /></ToolButton>
            <Timeline>
              <Track $height={10} />
              <Range type="range" aria-label="Speed" defaultValue="15" />
            </Timeline>
          </ToolRow>
          <ResultForm />
        </Main>
      </Window>
    </>
  );
}

export default App;
